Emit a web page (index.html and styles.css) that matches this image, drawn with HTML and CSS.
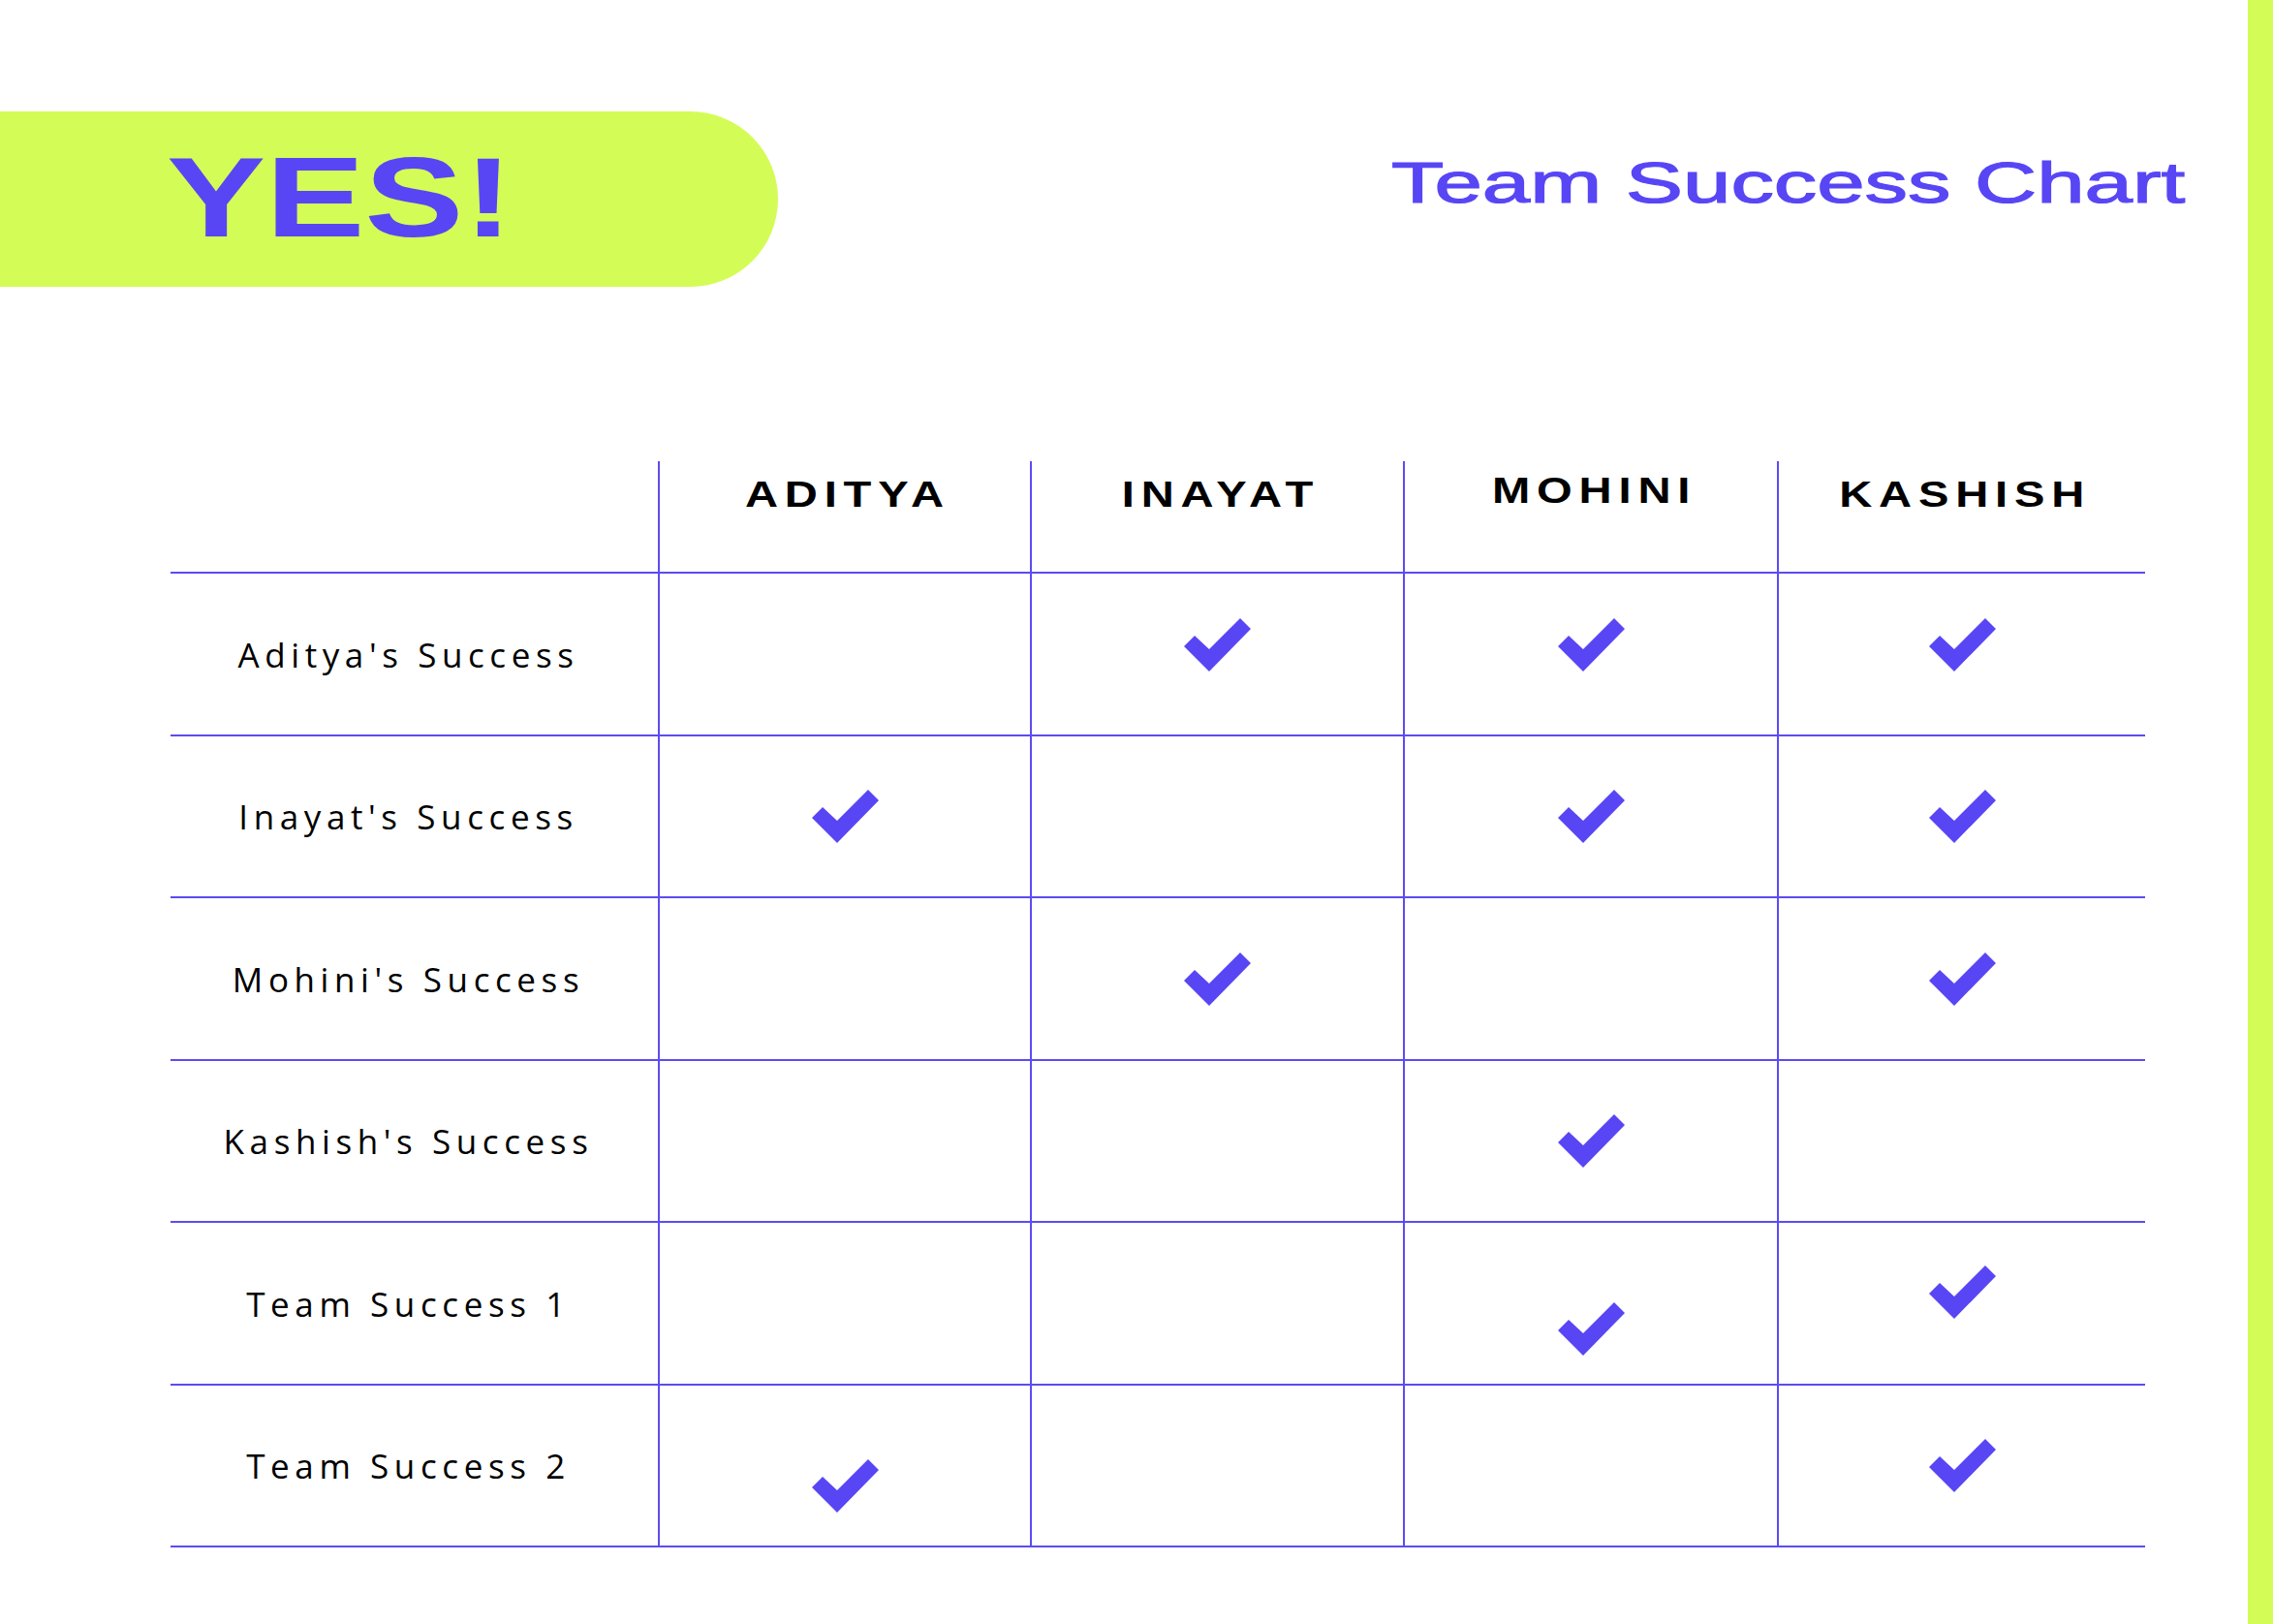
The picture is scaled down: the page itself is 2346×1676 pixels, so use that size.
FILE: index.html
```html
<!DOCTYPE html>
<html lang="en">
<head>
<meta charset="utf-8">
<title>Team Success Chart</title>
<link rel="stylesheet" href="styles.css">
</head>
<body>
<div class="page">
  <main class="sheet">
    <header class="top">
      <div class="banner"><span class="yes">YES!</span></div>
      <h1 class="title">Team Success Chart</h1>
    </header>

    <section class="chart">
      <div class="cell head"></div>
      <div class="cell head col"><span class="name">ADITYA</span></div>
      <div class="cell head col"><span class="name">INAYAT</span></div>
      <div class="cell head col"><span class="name raised">MOHINI</span></div>
      <div class="cell head col"><span class="name">KASHISH</span></div>

      <div class="cell label">Aditya's Success</div>
      <div class="cell col"></div>
      <div class="cell col"><svg class="check up10" viewBox="0 0 69 55"><polygon points="11,18 0,29 26,55 69,11 58,0 26,32"/></svg></div>
      <div class="cell col"><svg class="check up10" viewBox="0 0 69 55"><polygon points="11,18 0,29 26,55 69,11 58,0 26,32"/></svg></div>
      <div class="cell col"><svg class="check up10" viewBox="0 0 69 55"><polygon points="11,18 0,29 26,55 69,11 58,0 26,32"/></svg></div>

      <div class="cell label">Inayat's Success</div>
      <div class="cell col"><svg class="check" viewBox="0 0 69 55"><polygon points="11,18 0,29 26,55 69,11 58,0 26,32"/></svg></div>
      <div class="cell col"></div>
      <div class="cell col"><svg class="check" viewBox="0 0 69 55"><polygon points="11,18 0,29 26,55 69,11 58,0 26,32"/></svg></div>
      <div class="cell col"><svg class="check" viewBox="0 0 69 55"><polygon points="11,18 0,29 26,55 69,11 58,0 26,32"/></svg></div>

      <div class="cell label">Mohini's Success</div>
      <div class="cell col"></div>
      <div class="cell col"><svg class="check" viewBox="0 0 69 55"><polygon points="11,18 0,29 26,55 69,11 58,0 26,32"/></svg></div>
      <div class="cell col"></div>
      <div class="cell col"><svg class="check" viewBox="0 0 69 55"><polygon points="11,18 0,29 26,55 69,11 58,0 26,32"/></svg></div>

      <div class="cell label">Kashish's Success</div>
      <div class="cell col"></div>
      <div class="cell col"></div>
      <div class="cell col"><svg class="check" viewBox="0 0 69 55"><polygon points="11,18 0,29 26,55 69,11 58,0 26,32"/></svg></div>
      <div class="cell col"></div>

      <div class="cell label">Team Success 1</div>
      <div class="cell col"></div>
      <div class="cell col"></div>
      <div class="cell col"><svg class="check down26" viewBox="0 0 69 55"><polygon points="11,18 0,29 26,55 69,11 58,0 26,32"/></svg></div>
      <div class="cell col"><svg class="check up12" viewBox="0 0 69 55"><polygon points="11,18 0,29 26,55 69,11 58,0 26,32"/></svg></div>

      <div class="cell label">Team Success 2</div>
      <div class="cell col"><svg class="check down21" viewBox="0 0 69 55"><polygon points="11,18 0,29 26,55 69,11 58,0 26,32"/></svg></div>
      <div class="cell col"></div>
      <div class="cell col"></div>
      <div class="cell col"><svg class="check" viewBox="0 0 69 55"><polygon points="11,18 0,29 26,55 69,11 58,0 26,32"/></svg></div>
    </section>
  </main>
  <aside class="stripe"></aside>
</div>
</body>
</html>
```

FILE: styles.css
```css
* {
  box-sizing: border-box;
}

html, body {
  margin: 0;
  padding: 0;
  background: #ffffff;
}

body {
  font-family: "Open Sans", "Noto Sans", "Liberation Sans", sans-serif;
  color: #000000;
}

.page {
  width: 2346px;
  height: 1676px;
  display: flex;
  overflow: hidden;
  background: #ffffff;
}

.sheet {
  flex: 1;
  display: flex;
  flex-direction: column;
}

.stripe {
  width: 26px;
  flex: none;
  background: #d4fc56;
}

.top {
  display: flex;
  align-items: flex-start;
  margin-top: 115px;
}

.banner {
  width: 803px;
  height: 181px;
  flex: none;
  background: #d4fc56;
  border-radius: 0 91px 91px 0;
  padding: 31px 0 0 172px;
}

.yes {
  display: inline-block;
  font-family: "Liberation Sans", Arial, sans-serif;
  font-weight: 700;
  font-size: 116px;
  line-height: 116px;
  color: #5846f5;
  transform: scaleX(1.32);
  transform-origin: left top;
  white-space: nowrap;
}

.title {
  margin: 44px 0 0 633px;
  font-family: "Liberation Sans", Arial, sans-serif;
  font-weight: 400;
  font-size: 60px;
  line-height: 60px;
  color: #5846f5;
  -webkit-text-stroke: 1.2px #5846f5;
  white-space: nowrap;
  transform: scaleX(1.48);
  transform-origin: left top;
}

.chart {
  margin: 180px 0 0 176px;
  display: grid;
  grid-template-columns: 503px 384px 385px 386px 380px;
  grid-template-rows: 116px 168px 167px 168px 167px 168px 167px;
}

.cell {
  border-bottom: 2px solid #5b4cf2;
  display: flex;
  align-items: center;
  justify-content: center;
}

.cell.col {
  border-left: 2px solid #5b4cf2;
}

.cell.head {
  align-items: flex-start;
  padding-top: 15px;
}

.name {
  display: inline-block;
  font-family: "Liberation Sans", Arial, sans-serif;
  font-weight: 700;
  font-size: 36px;
  line-height: 40px;
  letter-spacing: 5.2px;
  padding-left: 5.2px;
  transform: scaleX(1.31);
  white-space: nowrap;
}

.name.raised {
  transform: translateY(-4px) scaleX(1.31);
}

.label {
  font-size: 35px;
  letter-spacing: 5.6px;
  padding-right: 12px;
  white-space: nowrap;
}

.check {
  width: 69px;
  height: 55px;
  fill: #5846f5;
  display: block;
}

.check.up10 { transform: translateY(-10px); }
.check.up12 { transform: translateY(-12px); }
.check.down21 { transform: translateY(21px); }
.check.down26 { transform: translateY(26px); }
```
